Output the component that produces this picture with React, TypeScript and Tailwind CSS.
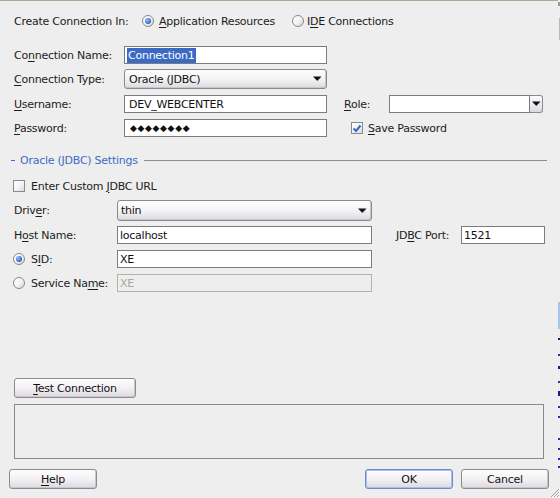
import React from "react";

const U = ({ children }: { children: React.ReactNode }) => (
  <span className="underline decoration-1 underline-offset-[2px]">{children}</span>
);

const Arrow = () => (
  <svg width="9" height="6" viewBox="0 0 9 6">
    <path d="M0.5 1.5h8L4.5 5.5z" fill="#9a9a9a" opacity="0.5" />
    <path d="M0 0.5h8.5L4.25 4.8z" fill="#111" />
  </svg>
);

const TextField = ({
  w,
  children,
  disabled,
}: {
  w: string;
  children?: React.ReactNode;
  disabled?: boolean;
}) => (
  <div
    className={`${w} h-[18px] flex items-center px-[2px] border ${
      disabled ? "border-[#b4b4a6] bg-[#eeeeee] text-[#a8a8a8]" : "border-[#7c7c7c] bg-white text-[#111]"
    }`}
  >
    {children}
  </div>
);

const Combo = ({ w, h, children }: { w: string; h: string; children: React.ReactNode }) => (
  <div
    className={`${w} ${h} flex items-center justify-between pl-[3px] pr-[4px] rounded-[3px] border border-[#8a8a8a] bg-gradient-to-b from-[#fefdfe] via-[#f4f3f5] to-[#dcdadf] shadow-[inset_-1px_-1px_0_#c8c6cb]`}
  >
    <span className="text-[#111]">{children}</span>
    <Arrow />
  </div>
);

const Radio = ({ checked }: { checked?: boolean }) => (
  <div className="w-[12px] h-[12px] shrink-0 rounded-full border border-[#8a8a8a] bg-gradient-to-br from-white via-[#f4f4f4] to-[#d6d6d6] flex items-center justify-center">
    {checked && (
      <div className="w-[6px] h-[6px] rounded-full bg-[radial-gradient(circle_at_35%_35%,#9cc0f5,#2a62d0_70%)]" />
    )}
  </div>
);

const Check = ({ checked }: { checked?: boolean }) => (
  <div className="w-[12px] h-[12px] shrink-0 border border-[#8a8a8a] bg-gradient-to-br from-white via-[#f5f5f5] to-[#dadada] flex items-center justify-center">
    {checked && (
      <svg width="10" height="9" viewBox="0 0 10 9">
        <path d="M1.5 4.5 L4 7 L8.5 1.5" stroke="#3568cc" strokeWidth="2" fill="none" />
      </svg>
    )}
  </div>
);

const Button = ({
  w,
  children,
  primary,
}: {
  w: string;
  children: React.ReactNode;
  primary?: boolean;
}) => (
  <div
    className={`${w} h-[20px] flex items-center justify-center rounded-[3px] border bg-gradient-to-b from-[#fefcfe] via-[#f3f1f4] to-[#dddae0] text-[#111] ${
      primary
        ? "border-[#6a8bd0] shadow-[inset_0_0_0_1px_#a9bfe9]"
        : "border-[#8c8c8c] shadow-[inset_-1px_-1px_0_#c9c7cc]"
    }`}
  >
    {children}
  </div>
);

export default function App() {
  return (
    <div className="relative w-[560px] h-[498px] overflow-hidden flex bg-[#eeeeee] text-[11px] tracking-[-0.25px] leading-none text-[#1c1c1c] font-['DejaVu_Sans',sans-serif]">
      <div className="w-[558px] flex flex-col">
        <div className="h-px bg-[#a9a993]" />

        {/* Create Connection In */}
        <div className="mt-[11px] h-[18px] flex items-center pl-[14px]">
          <div className="w-[128px]">Create Connection In:</div>
          <div className="w-[150px] flex items-center">
            <Radio checked />
            <span className="ml-[5px]">
              <U>A</U>pplication Resources
            </span>
          </div>
          <Radio />
          <span className="ml-[3px]">
            I<U>D</U>E Connections
          </span>
        </div>

        {/* Connection Name */}
        <div className="mt-[16px] h-[18px] flex items-center pl-[14px]">
          <div className="w-[110px]">
            Co<U>n</U>nection Name:
          </div>
          <TextField w="w-[203px]">
            <span className="bg-[#3a6ac4] text-white px-[1px] py-[2px]">Connection1</span>
          </TextField>
        </div>

        {/* Connection Type */}
        <div className="mt-[5px] h-[20px] flex items-center pl-[14px]">
          <div className="w-[110px]">
            <U>C</U>onnection Type:
          </div>
          <Combo w="w-[203px]" h="h-[20px]">
            <span className="pl-[1px]">Oracle (JDBC)</span>
          </Combo>
        </div>

        {/* Username / Role */}
        <div className="mt-[6px] h-[18px] flex items-center pl-[14px]">
          <div className="w-[110px]">
            <U>U</U>sername:
          </div>
          <TextField w="w-[203px]">
            <span className="pl-[2px]">DEV_WEBCENTER</span>
          </TextField>
          <div className="ml-[17px] w-[45px]">
            <U>R</U>ole:
          </div>
          <div className="w-[154px] h-[18px] flex">
            <div className="flex-1 border border-[#7c7c7c] bg-white" />
            <div className="w-[13px] flex items-center justify-center rounded-r-[3px] border border-l-0 border-[#8a8a8a] bg-gradient-to-b from-[#fefdfe] to-[#dcdadf]">
              <Arrow />
            </div>
          </div>
        </div>

        {/* Password */}
        <div className="mt-[6px] h-[18px] flex items-center pl-[14px]">
          <div className="w-[110px]">
            <U>P</U>assword:
          </div>
          <TextField w="w-[203px]">
            <span className="pl-[3px] text-[9px] tracking-[0.6px] text-[#111]">◆◆◆◆◆◆◆◆</span>
          </TextField>
          <div className="ml-[24px] flex items-center">
            <Check checked />
            <span className="ml-[5px]">
              <U>S</U>ave Password
            </span>
          </div>
        </div>

        {/* Section header */}
        <div className="mt-[16px] h-[14px] flex items-center pl-[11px] pr-[11px] text-[#3c6cc4]">
          <div className="w-[4px] h-px bg-[#3c6cc4]" />
          <span className="ml-[5px]">Oracle (JDBC) Settings</span>
          <div className="flex-1 ml-[6px] h-px bg-[#8e8e8e]" />
        </div>

        {/* Enter custom JDBC URL */}
        <div className="mt-[12px] h-[14px] flex items-center pl-[13px]">
          <Check />
          <span className="ml-[6px]">
            Enter Custom <U>J</U>DBC URL
          </span>
        </div>

        {/* Driver */}
        <div className="mt-[7px] h-[21px] flex items-center pl-[14px]">
          <div className="w-[103px]">
            Driv<U>e</U>r:
          </div>
          <Combo w="w-[255px]" h="h-[21px]">
            thin
          </Combo>
        </div>

        {/* Host / Port */}
        <div className="mt-[5px] h-[18px] flex items-center pl-[14px]">
          <div className="w-[103px]">
            H<U>o</U>st Name:
          </div>
          <TextField w="w-[255px]">localhost</TextField>
          <div className="ml-[24px] w-[65px]">
            JD<U>B</U>C Port:
          </div>
          <TextField w="w-[84px]">1521</TextField>
        </div>

        {/* SID */}
        <div className="mt-[6px] h-[18px] flex items-center pl-[13px]">
          <div className="w-[104px] flex items-center">
            <Radio checked />
            <span className="ml-[6px]">
              S<U>I</U>D:
            </span>
          </div>
          <TextField w="w-[255px]">XE</TextField>
        </div>

        {/* Service Name */}
        <div className="mt-[6px] h-[18px] flex items-center pl-[13px]">
          <div className="w-[104px] flex items-center">
            <Radio />
            <span className="ml-[6px]">
              Service Na<U>m</U>e:
            </span>
          </div>
          <TextField w="w-[255px]" disabled>
            XE
          </TextField>
        </div>

        {/* Test connection */}
        <div className="mt-[86px] pl-[14px] flex">
          <Button w="w-[122px]">
            <span>
              <U>T</U>est Connection
            </span>
          </Button>
        </div>

        <div className="mt-[6px] ml-[14px] w-[530px] h-[55px] border border-[#8a8a8a]" />

        {/* Bottom buttons */}
        <div className="mt-[10px] h-[20px] flex pl-[9px] pr-[9px]">
          <Button w="w-[88px]">
            <span>
              <U>H</U>elp
            </span>
          </Button>
          <div className="flex-1" />
          <Button w="w-[88px]" primary>
            OK
          </Button>
          <div className="w-[8px]" />
          <Button w="w-[88px]">Cancel</Button>
        </div>
      </div>

      {/* right edge strip of neighbouring window */}
      <div className="w-[2px] flex flex-col">
        <div className="mt-[2px] h-[4px] bg-[#9a9a9a]" />
        <div className="mt-[12px] h-[22px] w-px ml-[1px] bg-[#b8b8b8]" />
        <div className="mt-[262px] h-[27px] bg-[#a9c4ea]" />
        <div className="mt-[9px] h-[2px] bg-[#1a1a6a]" />
        <div className="mt-[14px] h-[2px] bg-[#2233aa]" />
        <div className="mt-[10px] h-[3px] bg-[#1a1a8a]" />
        <div className="mt-[12px] h-[2px] bg-[#2233aa]" />
        <div className="mt-[8px] h-[5px] bg-[#1a1a8a]" />
        <div className="mt-[10px] h-[2px] bg-[#2233aa]" />
        <div className="mt-[8px] h-[2px] bg-[#2233aa]" />
        <div className="mt-[20px] h-[2px] bg-[#2233aa]" />
        <div className="mt-[8px] h-[2px] bg-[#2233aa]" />
        <div className="mt-[8px] h-[2px] bg-[#2233aa]" />
        <div className="mt-[6px] h-[2px] bg-[#2233aa]" />
      </div>

      {/* resize grip */}
      <svg className="absolute right-0 bottom-0" width="11" height="11" viewBox="0 0 11 11">
        <path d="M10 2 L2 10 M10 5 L5 10 M10 8 L8 10" stroke="#a0a0a0" strokeWidth="1" />
        <path d="M11 3 L3 11 M11 6 L6 11 M11 9 L9 11" stroke="#ffffff" strokeWidth="1" />
      </svg>
    </div>
  );
}
